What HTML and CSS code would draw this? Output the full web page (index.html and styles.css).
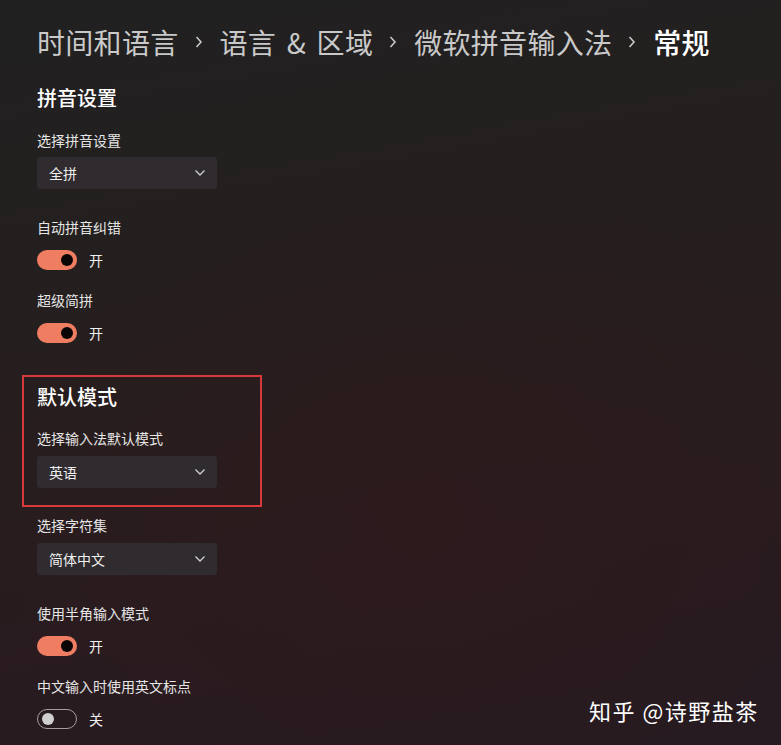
FILE: index.html
```html
<!DOCTYPE html>
<html lang="zh-CN">
<head>
<meta charset="utf-8">
<link rel="stylesheet" href="styles.css">
</head>
<body>
<div class="page">
  <h1 class="crumbs">
    <span class="crumb">时间和语言</span>
    <svg class="sep" width="8" height="14" viewBox="0 0 8 14"><path d="M1.5 2 L6 7 L1.5 12" fill="none" stroke="#c8c8c8" stroke-width="1.6"/></svg>
    <span class="crumb">语言 &amp; 区域</span>
    <svg class="sep" width="8" height="14" viewBox="0 0 8 14"><path d="M1.5 2 L6 7 L1.5 12" fill="none" stroke="#c8c8c8" stroke-width="1.6"/></svg>
    <span class="crumb">微软拼音输入法</span>
    <svg class="sep" width="8" height="14" viewBox="0 0 8 14"><path d="M1.5 2 L6 7 L1.5 12" fill="none" stroke="#c8c8c8" stroke-width="1.6"/></svg>
    <span class="crumb current">常规</span>
  </h1>

  <h2 class="section-title first">拼音设置</h2>
  <div class="label l-first">选择拼音设置</div>
  <div class="select"><span>全拼</span><svg width="12" height="8" viewBox="0 0 12 8"><path d="M1.5 1.5 L6 6 L10.5 1.5" fill="none" stroke="#d0d0d0" stroke-width="1.3"/></svg></div>

  <div class="label after-select">自动拼音纠错</div>
  <div class="toggle-row"><span class="toggle on"><span class="knob"></span></span><span class="state">开</span></div>

  <div class="label after-toggle">超级简拼</div>
  <div class="toggle-row"><span class="toggle on"><span class="knob"></span></span><span class="state">开</span></div>

  <div class="highlight">
    <h2 class="section-title">默认模式</h2>
    <div class="label l-box">选择输入法默认模式</div>
    <div class="select"><span>英语</span><svg width="12" height="8" viewBox="0 0 12 8"><path d="M1.5 1.5 L6 6 L10.5 1.5" fill="none" stroke="#d0d0d0" stroke-width="1.3"/></svg></div>
  </div>

  <div class="label after-box">选择字符集</div>
  <div class="select"><span>简体中文</span><svg width="12" height="8" viewBox="0 0 12 8"><path d="M1.5 1.5 L6 6 L10.5 1.5" fill="none" stroke="#d0d0d0" stroke-width="1.3"/></svg></div>

  <div class="label after-select">使用半角输入模式</div>
  <div class="toggle-row"><span class="toggle on"><span class="knob"></span></span><span class="state">开</span></div>

  <div class="label after-toggle">中文输入时使用英文标点</div>
  <div class="toggle-row"><span class="toggle off"><span class="knob"></span></span><span class="state">关</span></div>
</div>
<div class="watermark">知乎 @诗野盐茶</div>
</body>
</html>
```

FILE: styles.css
```css
html, body {
  margin: 0;
  padding: 0;
  width: 781px;
  height: 745px;
  overflow: hidden;
}
body {
  font-family: "Noto Sans CJK SC", "Noto Sans", sans-serif;
  color: #e8e8e8;
  background:
    radial-gradient(ellipse 420px 360px at 420px 520px, rgba(48,26,28,0.55), rgba(48,26,28,0) 100%),
    linear-gradient(170deg, #212021 0%, #23201f 25%, #281d1e 55%, #291b1f 75%, #251b21 100%);
  position: relative;
}
.page {
  padding: 24px 0 0 37px;
}
.crumbs {
  margin: 0;
  display: flex;
  align-items: center;
  font-size: 28px;
  font-weight: 400;
  line-height: 36px;
  height: 36px;
  color: #c9c9c9;
  white-space: nowrap;
  word-spacing: 4px;
  letter-spacing: 0.3px;
}
.crumbs .sep {
  margin: 0 17px 0 16px;
  flex: none;
}
.crumb.current {
  color: #ffffff;
  font-weight: 500;
}
.section-title {
  margin: 0;
  font-size: 20px;
  font-weight: 500;
  line-height: 28px;
  color: #ffffff;
}
.section-title.first {
  margin-top: 24px;
}
.label {
  font-size: 14px;
  line-height: 20px;
  color: #e6e6e6;
}
.l-first { margin-top: 18px; margin-bottom: 7px; }
.l-box { margin-top: 17px; margin-bottom: 8px; }
.after-select { margin-top: 28px; margin-bottom: 13px; }
.after-toggle { margin-top: 20px; margin-bottom: 13px; }
.after-box { margin-top: 8px; margin-bottom: 8px; }
.select {
  width: 180px;
  height: 32px;
  box-sizing: border-box;
  background: #2f2b2e;
  border-radius: 3px;
  display: flex;
  align-items: center;
  justify-content: space-between;
  padding: 0 11px 0 12px;
  font-size: 14px;
  color: #f0f0f0;
}
.toggle-row {
  display: flex;
  align-items: center;
  height: 20px;
  gap: 12px;
  font-size: 14px;
  color: #f0f0f0;
}
.toggle {
  width: 40px;
  height: 20px;
  box-sizing: border-box;
  border-radius: 10px;
  display: flex;
  align-items: center;
  flex: none;
}
.toggle.on {
  background: #ee7d61;
  justify-content: flex-end;
  padding-right: 4px;
}
.toggle.on .knob {
  width: 12px;
  height: 12px;
  border-radius: 50%;
  background: #0a0606;
}
.toggle.off {
  border: 1px solid #a49c9e;
  padding-left: 4px;
}
.toggle.off .knob {
  width: 12px;
  height: 12px;
  border-radius: 50%;
  background: #cfcfcf;
}
.highlight {
  margin: 32px 0 0 -15px;
  width: 240px;
  box-sizing: border-box;
  border: 2px solid #d8393b;
  padding: 6px 0 17px 13px;
}
.watermark {
  position: absolute;
  left: 589px;
  top: 695px;
  font-size: 22px;
  line-height: 30px;
  letter-spacing: 1.5px;
  color: #ffffff;
  white-space: nowrap;
}
```
